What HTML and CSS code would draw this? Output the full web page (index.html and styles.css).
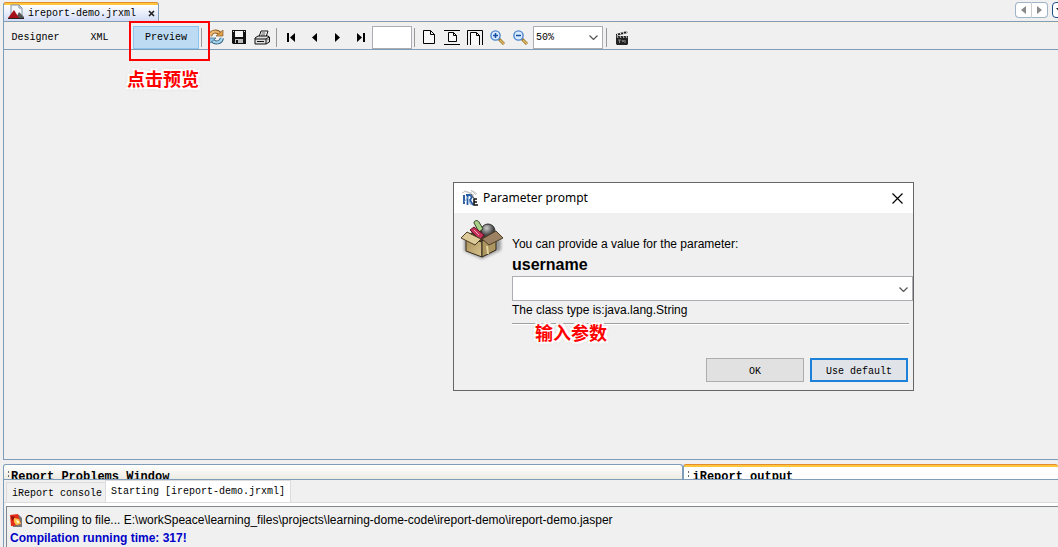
FILE: index.html
```html
<!DOCTYPE html>
<html lang="en">
<head>
<meta charset="utf-8">
<title>iReport</title>
<link rel="stylesheet" href="styles.css">
</head>
<body>
<header class="tabbar">
  <div class="doc-tab">
    <svg class="doc-icon" width="16" height="16" viewBox="0 0 16 16"><path d="M3 1h8l3 3v10H3z" fill="#f4f7fb" stroke="#8593a6"/><path d="M11 1v3h3" fill="none" stroke="#8593a6"/><path d="M8 14l3-6 5 5v1z" fill="#555"/><path d="M0 14L6 6l5 8z" fill="#a60f17"/><path d="M0 14.500h16" stroke="#222"/></svg>
    <span class="doc-name">ireport-demo.jrxml</span>
    <button class="tab-close" aria-label="Close tab"><svg width="7" height="7" viewBox="0 0 7 7"><path d="M1 1l5 5M6 1L1 6" stroke="#222" stroke-width="1.700"/></svg></button>
  </div>
  <div class="tab-nav">
    <button class="nav-btn first" aria-label="Scroll left"><svg width="5" height="8" viewBox="0 0 5 8"><path d="M5 0v8L0 4z" fill="#8a8a8a"/></svg></button>
    <button class="nav-btn last" aria-label="Scroll right"><svg width="5" height="8" viewBox="0 0 5 8"><path d="M0 0v8l5-4z" fill="#8a8a8a"/></svg></button>
    <button class="nav-list" aria-label="Show tabs"><svg width="8" height="5" viewBox="0 0 8 5"><path d="M0 0h8L4 5z" fill="#222"/></svg></button>
  </div>
</header>

<main class="editor">
  <div class="toolbar">
    <button class="mode designer">Designer</button>
    <button class="mode xml">XML</button>
    <button class="mode preview">Preview</button>
    <span class="sep"></span>
    <button class="tool" aria-label="Reload"><svg width="16" height="16" viewBox="0 0 16 16"><path d="M2 7C3 2 9 1 12 5" fill="none" stroke="#8b5a1c" stroke-width="4"/><path d="M2 7C3 2 9 1 12 5" fill="none" stroke="#eab871" stroke-width="2.200"/><path d="M8 7h7V1z" fill="#dfa04e" stroke="#8b5a1c" stroke-width=".7"/><path d="M14 9c-1 5-7 6-10 2" fill="none" stroke="#33617f" stroke-width="4"/><path d="M14 9c-1 5-7 6-10 2" fill="none" stroke="#a4d3ec" stroke-width="2.200"/><path d="M8 9H1v6z" fill="#8fc5e4" stroke="#33617f" stroke-width=".7"/></svg></button>
    <button class="tool" aria-label="Save"><svg width="14" height="14" viewBox="0 0 14 14"><path d="M0 0h14v14H1l-1-1z" fill="#111"/><path d="M3 1h8v6H3z" fill="#f5f5f5"/><path d="M1 1h1v1H1zM12 1h1v1h-1z" fill="#ddd"/><path d="M3 9h8v4H3z" fill="#bbb"/><path d="M4 10h2v3H4z" fill="#111"/></svg></button>
    <button class="tool" aria-label="Print"><svg width="16" height="15" viewBox="0 0 16 15"><path d="M5 7l2-6h7l-2 6" fill="#fff" stroke="#111"/><path d="M7.500 3h4M7 5h4" stroke="#555"/><path d="M1 8l3-2h10l1.500 1v5L12 14H1z" fill="#ddd" stroke="#111"/><path d="M1 9h11v5M12 9l3-2" fill="none" stroke="#111"/><path d="M3 11.500h7" stroke="#111"/><path d="M13 10l2-1" stroke="#888"/></svg></button>
    <span class="sep wide"></span>
    <button class="tool" aria-label="First page"><svg width="9" height="9" viewBox="0 0 9 9"><path d="M0 0h2v9H0zM8 0v9L3 4.500z" fill="#000"/></svg></button>
    <button class="tool" aria-label="Previous page"><svg width="9" height="9" viewBox="0 0 9 9"><path d="M7 0v9L2 4.500z" fill="#000"/></svg></button>
    <button class="tool" aria-label="Next page"><svg width="9" height="9" viewBox="0 0 9 9"><path d="M2 0v9l5-4.500z" fill="#000"/></svg></button>
    <button class="tool" aria-label="Last page"><svg width="9" height="9" viewBox="0 0 9 9"><path d="M7 0h2v9H7zM1 0v9l5-4.500z" fill="#000"/></svg></button>
    <input class="page-no" type="text" aria-label="Page number">
    <span class="sep"></span>
    <button class="tool" aria-label="Actual size"><svg width="12" height="14" viewBox="0 0 12 14"><path d="M.5.500h7l4 4v9H.5zM7.500.500v4h4" fill="#f8f8f8" stroke="#000"/></svg></button>
    <button class="tool" aria-label="Fit page"><svg width="16" height="15" viewBox="0 0 16 15"><path d="M0 .5h16M0 14.500h16" stroke="#000"/><path d="M4.500 2.500h5l3 3v6h-8zM9.500 2.500v3h3" fill="#f8f8f8" stroke="#000"/></svg></button>
    <button class="tool" aria-label="Fit width"><svg width="16" height="15" viewBox="0 0 16 15"><path d="M.5 15V.500h15V15" fill="none" stroke="#000"/><path d="M3.500 15V2.500h6l3 3V15M9.500 2.500v3h3" fill="#f8f8f8" stroke="#000"/></svg></button>
    <button class="tool" aria-label="Zoom in"><svg width="15" height="15" viewBox="0 0 15 15"><path d="M9 9l5 5" stroke="#94712b" stroke-width="3"/><path d="M10 10l4 4" stroke="#e6bd66" stroke-width="1.400"/><circle cx="5.500" cy="5.500" r="4.600" fill="#d8ebff" stroke="#4c83cc" stroke-width="1.400"/><path d="M3 5.500h5M5.500 3v5" stroke="#174e9f" stroke-width="1.500"/></svg></button>
    <button class="tool" aria-label="Zoom out"><svg width="15" height="15" viewBox="0 0 15 15"><path d="M9 9l5 5" stroke="#94712b" stroke-width="3"/><path d="M10 10l4 4" stroke="#e6bd66" stroke-width="1.400"/><circle cx="5.500" cy="5.500" r="4.600" fill="#d8ebff" stroke="#4c83cc" stroke-width="1.400"/><path d="M3 5.500h5" stroke="#174e9f" stroke-width="1.500"/></svg></button>
    <div class="combo zoom">
      <select aria-label="Zoom level"><option>50%</option></select>
      <svg class="chevron" width="9" height="5" viewBox="0 0 9 5"><path d="M.5.500l4 4 4-4" fill="none" stroke="#555" stroke-width="1.200"/></svg>
    </div>
    <span class="sep wide"></span>
    <button class="tool" aria-label="Movie"><svg width="14" height="15" viewBox="0 0 14 15"><path d="M1 6h12v8l-1 1H2l-1-1z" fill="#222"/><path d="M1 4l11-3 .5 2L1 6z" fill="#222"/><path d="M2 3.500l1 2M5 2.700l1 2M8 2l1 2M11 1l1 2" stroke="#eee"/><path d="M2 6l1 2M5 6l1 2M8 6l1 2M11 6l1 2" stroke="#ccc"/><path d="M3 10h3M4.500 10v3M7 10l1 2 1-2M10 10v3" stroke="#888" fill="none"/></svg></button>
  </div>
  <div class="canvas"></div>
</main>

<section class="output">
  <div class="dock-tabs">
    <div class="dock-tab problems"><span class="grip"></span>Report Problems Window</div>
    <div class="dock-tab current"><span class="grip"></span>iReport output</div>
  </div>
  <div class="console">
    <div class="console-tabs">
      <button class="console-tab">iReport console</button>
      <button class="console-tab selected">Starting [ireport-demo.jrxml]</button>
    </div>
    <div class="log">
      <p class="log-line"><svg width="12" height="13" viewBox="0 0 12 13"><path d="M1 1h8l3 3v9H3z" fill="#777"/><path d="M0 1l8-1 3 10-8 2H1z" fill="#e32d16"/><path d="M1 2l4 1-3 4z" fill="#8f1208"/><path d="M4 4l5 1 2 5-5 1-2-3z" fill="#ffc24b"/><path d="M6 6l3 1v2H7z" fill="#fff3c8"/></svg>Compiling to file... E:\workSpeace\learning_files\projects\learning-dome-code\ireport-demo\ireport-demo.jasper</p>
      <p class="log-line timing">Compilation running time: 317!</p>
    </div>
  </div>
</section>

<div class="dialog" role="dialog" aria-labelledby="dlg-title">
  <div class="dialog-title">
    <svg width="17" height="17" viewBox="0 0 17 17"><path d="M0 3l4-2 4 2 3-2 4 3M2 1l10 4M9 0l5 5" stroke="#c4c4c4" fill="none"/><path d="M1 5h2v9H1z" fill="#345f9e"/><path d="M4 5h4l2 2-2 3 3 5M5.500 6v9" stroke="#285ea5" stroke-width="1.800" fill="none"/><path d="M2 12l5-6M7 11l2 4" stroke="#7aa4d4"/><path d="M15 9h-3v6h4M12 12h3" stroke="#111" stroke-width="1.600" fill="none"/><path d="M9 4l3 4" stroke="#555"/></svg>
    <h1 id="dlg-title">Parameter prompt</h1>
    <button class="dialog-close" aria-label="Close"><svg width="11" height="11" viewBox="0 0 11 11"><path d="M.5.500l10 10M10.500.500l-10 10" stroke="#000" stroke-width="1.200"/></svg></button>
  </div>
  <div class="dialog-body">
    <svg class="box-icon" width="46" height="42" viewBox="0 0 46 42">
      <defs>
        <filter id="soft" x="-20%" y="-20%" width="140%" height="140%"><feGaussianBlur stdDeviation="1.500"/></filter>
        <linearGradient id="front" x2="1" y2="1"><stop stop-color="#a98c58"/><stop offset="1" stop-color="#d9c690"/></linearGradient>
        <radialGradient id="ball" cx=".4" cy=".3"><stop stop-color="#ccc"/><stop offset="1" stop-color="#444"/></radialGradient>
      </defs>
      <path d="M4 32l18 8 19-9V20H4z" fill="#777" opacity=".7" filter="url(#soft)"/>
      <path d="M8 15l12-5 17 5-14 9z" fill="#4a3922"/>
      <circle cx="28" cy="12" r="7" fill="url(#ball)" stroke="#2d2d2d"/>
      <path d="M14 4c0-3 4-3 5-1l4 7-4 3z" fill="#a9cf88" stroke="#344226"/>
      <path d="M10 11l4-3 10 8-4 5z" fill="#c8325a" stroke="#601324"/>
      <path d="M14 11l5 5" stroke="#f3a5b8"/>
      <path d="M6 19l16 4v15L6 32z" fill="url(#front)" stroke="#383021"/>
      <path d="M22 22l14-5v14l-14 7z" fill="#ad955f" stroke="#2d261a"/>
      <path d="M7 13l14 7-6 6-14-7z" fill="#dccb98" stroke="#4a3d25"/>
      <path d="M22 20l14-8 7 7-14 7z" fill="#9c8262" stroke="#4a3d25"/>
      <path d="M27 27l1 8" stroke="#e2d29d" stroke-width="2"/>
    </svg>
    <form class="prompt">
      <label class="hint" for="value">You can provide a value for the parameter:</label>
      <h2>username</h2>
      <div class="combo value">
        <input id="value" type="text">
        <svg class="chevron" width="9" height="5" viewBox="0 0 9 5"><path d="M.5.500l4 4 4-4" fill="none" stroke="#555" stroke-width="1.200"/></svg>
      </div>
      <p class="hint">The class type is:java.lang.String</p>
      <hr>
      <div class="actions">
        <button type="button" class="btn">OK</button>
        <button type="button" class="btn default">Use default</button>
      </div>
    </form>
  </div>
</div>

<div class="mark-box"></div>
<div class="note click">点击预览</div>
<div class="note enter">输入参数</div>
</body>
</html>
```
FILE: styles.css
```css
* { box-sizing: border-box; }
body {
  margin: 0;
  height: 100vh;
  display: flex;
  flex-direction: column;
  overflow: hidden;
  position: relative;
  background: #f0f0f0;
  color: #000;
  font: 10px/14px "Liberation Mono", monospace;
}
button, input, select { font: inherit; color: inherit; margin: 0; padding: 0; }
button { background: none; border: 0; }
svg { display: block; flex: none; }
h1, h2, p { margin: 0; }

.tabbar { display: flex; justify-content: space-between; height: 21px; padding: 2px 0 0 3px; flex: none; }
.doc-tab {
  display: flex;
  align-items: center;
  height: 19px;
  padding: 0 3px 0 4px;
  border: 1px solid #7f9db9;
  border-top: 1px solid #e68b2c;
  border-bottom: 0;
  border-radius: 3px 3px 0 0;
  background: linear-gradient(#ffc73c 2px, #fff 2px, #d2dcf6);
}
.doc-name { margin-left: 4px; padding-top: 4px; }
.tab-close { margin-left: 12px; padding-top: 3px; }
.tab-nav { display: flex; align-items: flex-start; }
.nav-btn, .nav-list {
  display: flex;
  align-items: center;
  justify-content: center;
  width: 17px;
  height: 16px;
  background: #fff;
  border: 1px solid #9fb4c9;
}
.nav-btn.first { border-radius: 4px 0 0 4px; border-right-color: #ccc; }
.nav-btn.last { width: 16px; border-left: 0; border-radius: 0 4px 4px 0; }
.nav-list { width: 16px; margin: 0 -10px 0 4px; justify-content: flex-start; padding-left: 3px; border-color: #1f4f8b; border-radius: 4px; }

.editor {
  flex: 1;
  display: flex;
  flex-direction: column;
  margin-left: 3px;
  border: solid #7f9db9;
  border-width: 1px 0 1px 1px;
}
.toolbar {
  display: flex;
  align-items: center;
  height: 28px;
  padding: 2px 0 0 1px;
  border-top: 1px solid #f6f0dc;
  border-bottom: 1px solid #7f9db9;
}
.canvas { flex: 1; }
.mode { height: 23px; padding-top: 2px; }
.designer { width: 61px; }
.xml { width: 67px; }
.preview { width: 66px; background: #bddcf4; border: 1px solid #8cc4f0; }
.sep { flex: none; width: 1px; height: 19px; margin: 0 2px; background: #999; }
.sep.wide { margin: 0 3px; }
.tool { display: flex; align-items: center; justify-content: center; flex: none; width: 23px; height: 23px; }
.page-no { width: 40px; height: 23px; border: 1px solid #abadb3; background: #fff; }
.combo { position: relative; display: flex; background: #fff; border: 1px solid #abadb3; }
.combo select, .combo input { flex: 1; width: 100%; border: 0; background: none; appearance: none; outline: 0; }
.combo .chevron { position: absolute; right: 4px; top: 50%; margin-top: -2px; pointer-events: none; }
.zoom { width: 70px; height: 23px; margin-left: 1px; }
.zoom select { padding: 2px 0 0 2px; }

.output { flex: none; height: 87px; margin-left: 3px; padding-top: 4px; display: flex; flex-direction: column; }
.dock-tabs { display: flex; height: 17px; overflow: hidden; border-bottom: 1px solid #7f9db9; }
.dock-tab {
  display: flex;
  gap: 1px;
  overflow: hidden;
  padding: 5px 0 0 3px;
  border: 1px solid #7f9db9;
  border-bottom: 0;
  border-radius: 3px 3px 0 0;
  font-size: 12px;
  font-weight: bold;
  white-space: nowrap;
}
.problems { flex: 680; background: linear-gradient(#fff, #ecebe3); }
.current { flex: 373; border-top-color: #e68b2c; border-right: 0; background: linear-gradient(#ffc73c 2px, #fff 2px); }
.grip { width: 3px; height: 7px; background: radial-gradient(circle, #666 1px, transparent 1px) 0 0 / 3px 4px; }
.current .grip { margin-right: 1px; }
.console { flex: 1; display: flex; flex-direction: column; border-left: 1px solid #7f9db9; }
.console-tabs { display: flex; align-items: flex-end; height: 23px; padding-left: 2px; border-bottom: 1px solid #dcdcdc; }
.console-tab { height: 20px; padding: 2px 4px 0 5px; border: 1px solid #dcdcdc; border-bottom: 0; white-space: nowrap; }
.console-tab.selected { height: 22px; margin-left: -2px; padding: 0 5px 0; background: #fff; }
.log {
  flex: 1;
  margin: 3px 0 0 2px;
  padding: 4px 0 0 3px;
  overflow: hidden;
  border: solid #82878f;
  border-width: 1px 0 0 1px;
  box-shadow: 0 -3px #fff;
  font: 12px/18px "Liberation Sans", Arial, sans-serif;
}
.log-line { display: flex; align-items: center; gap: 3px; white-space: nowrap; }
.timing { color: #0000c8; font-weight: bold; }

.dialog {
  position: absolute;
  left: 453px;
  top: 182px;
  width: 461px;
  background: #f0f0f0;
  border: 1px solid #666;
}
.dialog-title { display: flex; align-items: center; gap: 4px; height: 30px; padding: 0 10px 0 8px; background: #fff; }
.dialog-title h1 { flex: 1; font: 12px/18px "Noto Sans", sans-serif; }
.dialog-body { display: flex; padding: 6px 0 8px 6px; }
.prompt { flex: 1; margin-left: 6px; padding-top: 16px; font: 12px/18px "Liberation Sans", Arial, sans-serif; }
.hint { display: block; }
.prompt h2 { font-size: 16px; line-height: 23px; }
.value { height: 25px; }
.value input { padding: 0 18px 0 4px; }
.prompt hr { height: 2px; margin: 4px 4px 0 0; border: 0; border-top: 1px solid #a0a0a0; border-bottom: 1px solid #fff; }
.actions { display: flex; justify-content: flex-end; gap: 6px; margin: 33px 5px 0 0; }
.btn { width: 98px; height: 24px; padding-top: 3px; border: 1px solid #adadad; background: #e1e1e1; font: 10px/14px "Liberation Mono", monospace; }
.btn.default { border: 2px solid #1c82d9; background: #e0e4e8; }

.mark-box { position: absolute; left: 129px; top: 21px; width: 81px; height: 40px; border: 2px solid #f00; pointer-events: none; }
.note {
  position: absolute;
  color: #f00;
  font: bold 18px/24px "Noto Sans CJK SC", sans-serif;
  text-shadow: 1px 0 #fff, -1px 0 #fff, 0 1px #fff, 0 -1px #fff, 2px 2px 1px #fff, -2px -2px 1px #fff, -2px 2px 1px #fff, 2px -2px 1px #fff, 0 0 4px #aaa;
}
.click { left: 127px; top: 66px; }
.enter { left: 535px; top: 320px; }
```
